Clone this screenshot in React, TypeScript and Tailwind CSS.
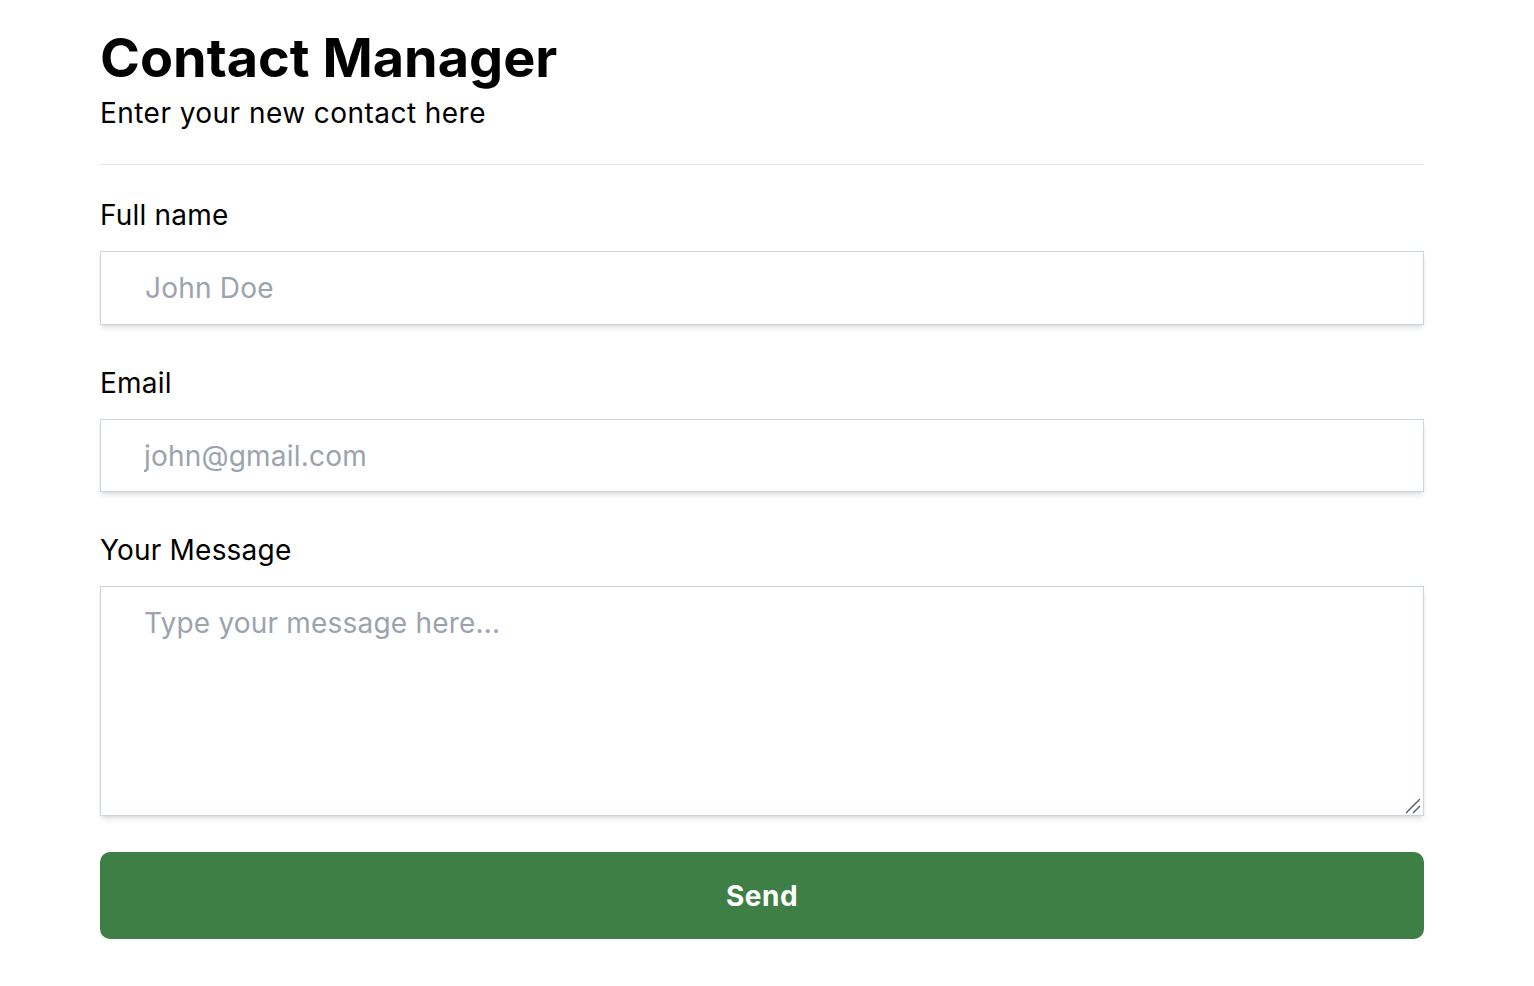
export default function App() {
  return (
    <div className="min-h-screen bg-white font-['Inter',sans-serif] text-black">
      <div className="pl-[100px] pr-[110px] pt-[29px] pb-10">
        <h1 className="text-[54px] leading-[58px] font-bold">Contact Manager</h1>
        <p className="mt-[8px] text-[28px] leading-[36px] tracking-[0.45px]">Enter your new contact here</p>
        <hr className="mt-[33px] border-t border-[#e5e7eb]" />

        <form className="mt-[32px] flex flex-col" onSubmit={(e) => e.preventDefault()}>
          <label className="text-[28px] leading-[36px] tracking-[0.2px]">Full name</label>
          <input
            type="text"
            placeholder="John Doe"
            className="mt-[18px] h-[74px] w-full border border-[#cbd5e1] bg-white px-[44px] text-[28px] leading-[36px] tracking-[0.2px] shadow-md outline-none placeholder:text-[#9ca3af]"
          />

          <label className="mt-[40px] text-[28px] leading-[36px] tracking-[0.2px]">Email</label>
          <input
            type="email"
            placeholder="john@gmail.com"
            className="mt-[18px] h-[73px] w-full border border-[#cbd5e1] bg-white px-[43px] text-[28px] leading-[36px] tracking-[0.2px] shadow-md outline-none placeholder:text-[#9ca3af]"
          />

          <label className="mt-[40px] text-[28px] leading-[36px] tracking-[0.2px]">Your Message</label>
          <div className="relative mt-[18px]">
            <textarea
              placeholder="Type your message here..."
              className="block h-[230px] w-full resize-none border border-[#cbd5e1] bg-white px-[43px] pt-[18px] text-[28px] leading-[36px] tracking-[0.2px] shadow-md outline-none placeholder:text-[#9ca3af]"
            />
            {/* resize grip */}
            <svg className="pointer-events-none absolute right-[3px] bottom-[2px]" width="16" height="16" viewBox="0 0 16 16">
              <path d="M1.5 14.5 L14.5 1.5 M8.5 14.5 L14.5 8.5" stroke="#555" strokeWidth="1.4" strokeLinecap="round" />
            </svg>
          </div>

          <button
            type="submit"
            className="mt-[36px] h-[87px] w-full rounded-[10px] bg-[#3e7f46] text-[28px] font-bold tracking-[0.5px] text-white"
          >
            Send
          </button>
        </form>
      </div>
    </div>
  )
}
